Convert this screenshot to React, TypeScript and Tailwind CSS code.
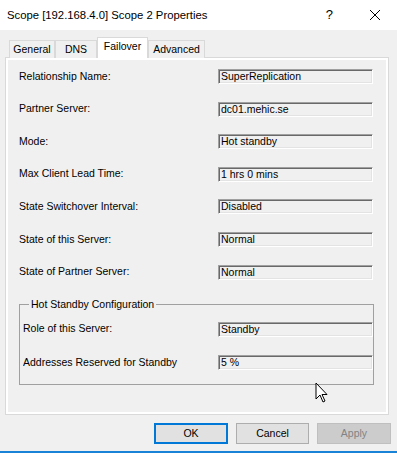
import React from "react";

type Row = { label: string; value: string };

const rows: Row[] = [
  { label: "Relationship Name:", value: "SuperReplication" },
  { label: "Partner Server:", value: "dc01.mehic.se" },
  { label: "Mode:", value: "Hot standby" },
  { label: "Max Client Lead Time:", value: "1 hrs 0 mins" },
  { label: "State Switchover Interval:", value: "Disabled" },
  { label: "State of this Server:", value: "Normal" },
  { label: "State of Partner Server:", value: "Normal" },
];

const ReadOnlyBox = ({ value }: { value: string }) => (
  <div className="w-[155px] h-[15px] border border-t-[#a0a0a0] border-l-[#a0a0a0] border-b-white border-r-white shadow-[inset_1px_1px_0_#696969,inset_-1px_-1px_0_#e3e3e3] pl-[2px] leading-[13px] whitespace-nowrap overflow-hidden">
    {value}
  </div>
);

const Tab = ({
  label,
  width,
  active,
}: {
  label: string;
  width: string;
  active?: boolean;
}) => (
  <div
    className={`${
      active
        ? "h-[21px] bg-white z-10 pb-[3px]"
        : "h-[18px] mt-[3px] bg-[#f0f0f0]"
    } ${width} border border-[#d9d9d9] border-b-0 flex items-center justify-center`}
  >
    {label}
  </div>
);

const Cursor = () => (
  <svg
    className="absolute left-[315px] top-[382px]"
    width="13"
    height="21"
    viewBox="0 0 13 21"
  >
    <path
      d="M1 1 L1 17 L5 13 L8 20 L10 19 L7 12.5 L12 12.5 Z"
      fill="white"
      stroke="black"
      strokeWidth="1"
      strokeLinejoin="miter"
    />
  </svg>
);

export default function App() {
  return (
    <div
      className="relative w-[397px] h-[453px] bg-[#f0f0f0] overflow-hidden text-[10.5px] text-black border-b-2 border-[#1883d7]"
      style={{ fontFamily: '"Liberation Sans", Arial, sans-serif' }}
    >
      <div className="h-[30px] bg-white flex items-center pl-[7px] text-[11.3px]">
        <span>Scope [192.168.4.0] Scope 2 Properties</span>
        <span className="ml-auto mr-[36px] text-[13px]">?</span>
        <svg width="12" height="12" viewBox="0 0 12 12" className="mr-[16px]">
          <path d="M1 1 L11 11 M11 1 L1 11" stroke="black" strokeWidth="1" />
        </svg>
      </div>

      <div className="flex pl-[9px] mt-[7px] h-[21px] items-start">
        <Tab label="General" width="w-[46px]" />
        <Tab label="DNS" width="w-[42px]" />
        <Tab label="Failover" width="w-[51px]" active />
        <Tab label="Advanced" width="w-[57px]" />
      </div>

      <div className="ml-[5px] w-[384px] h-[358px] -mt-[1px] border border-[#d9d9d9] bg-white p-[2px]">
        <div className="h-full bg-[#f0f0f0] pl-[11px] pt-[9px]">
          <div className="flex flex-col gap-[17.6px]">
            {rows.map((r) => (
              <div key={r.label} className="flex items-center h-[15px]">
                <div className="w-[199px]">{r.label}</div>
                <ReadOnlyBox value={r.value} />
              </div>
            ))}
          </div>

          <fieldset className="mt-[18px] w-[355px] border border-[#a0a0a0] pl-[3px] pb-[14px]">
            <legend className="ml-[6px] px-[2px] leading-[13px]">
              Hot Standby Configuration
            </legend>
            <div className="flex items-center h-[15px] mt-[11px]">
              <div className="w-[195px]">Role of this Server:</div>
              <ReadOnlyBox value="Standby" />
            </div>
            <div className="flex items-start h-[15px] mt-[18px]">
              <div className="w-[195px] h-[17px] overflow-hidden leading-[14px] pr-[30px]">
                Addresses Reserved for Standby Server:
              </div>
              <ReadOnlyBox value="5 %" />
            </div>
          </fieldset>
        </div>
      </div>

      <div className="flex justify-end gap-[8px] pr-[6px] mt-[8px]">
        <button className="w-[74px] h-[21px] bg-[#e1e1e1] border-2 border-[#0078d7] leading-none">
          OK
        </button>
        <button className="w-[73px] h-[21px] bg-[#e1e1e1] border border-[#adadad] leading-none">
          Cancel
        </button>
        <button
          disabled
          className="w-[74px] h-[21px] bg-[#cccccc] border border-[#bfbfbf] text-[#838383] leading-none"
        >
          Apply
        </button>
      </div>

      <Cursor />
    </div>
  );
}
